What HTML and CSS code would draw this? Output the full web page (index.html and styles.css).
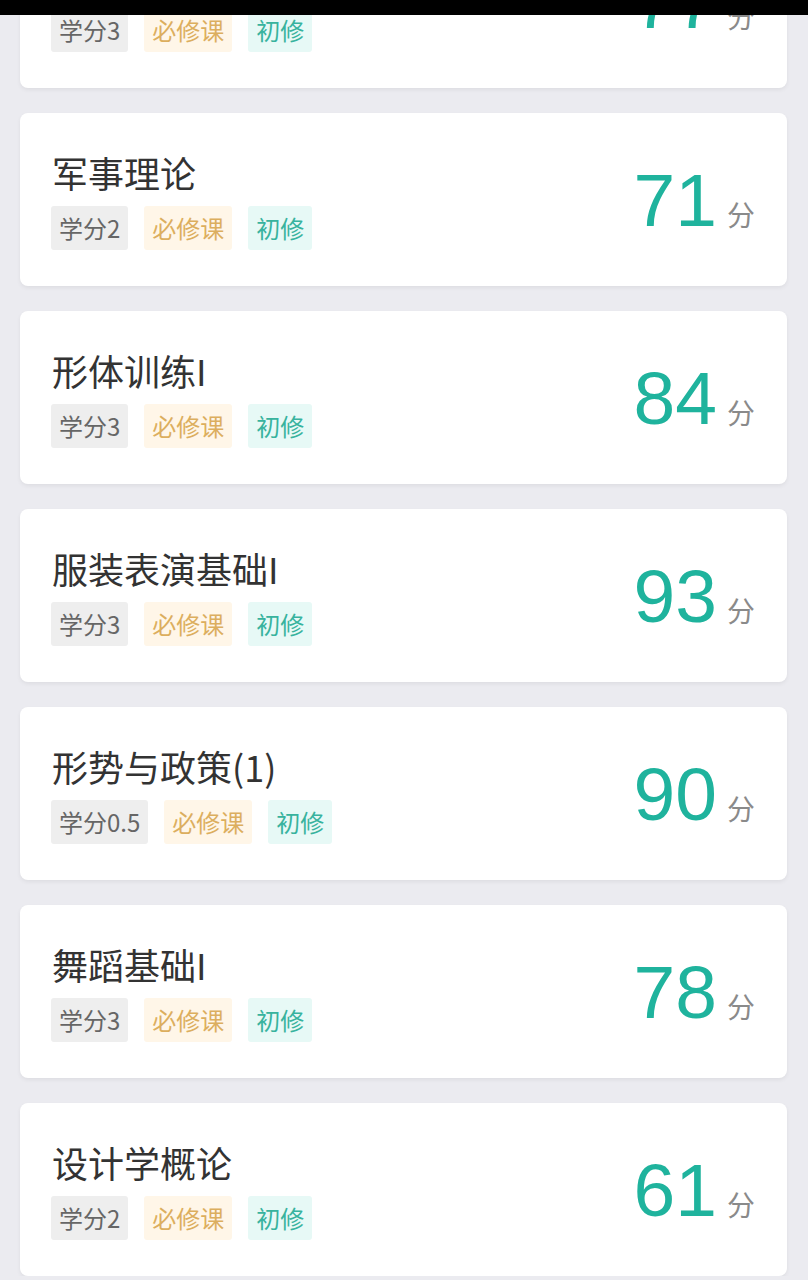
FILE: index.html
```html
<!DOCTYPE html>
<html lang="zh-CN">
<head>
    <meta charset="UTF-8">
    <meta name="viewport" content="width=device-width, initial-scale=1.0">
    <title>成绩</title>
    <link rel="stylesheet" href="styles.css">
</head>
<body>

    <div class="status-bar"></div>

    <main class="score-list" id="score-list">
        <!-- Course cards added here -->
    </main>

    <script>
        // Course scores
        const courses = [
            { name: "大学英语", credit: "3", score: 77 },
            { name: "军事理论", credit: "2", score: 71 },
            { name: "形体训练I", credit: "3", score: 84 },
            { name: "服装表演基础I", credit: "3", score: 93 },
            { name: "形势与政策(1)", credit: "0.5", score: 90 },
            { name: "舞蹈基础I", credit: "3", score: 78 },
            { name: "设计学概论", credit: "2", score: 61 }
        ];

        function displayCourses() {
            const list = document.getElementById("score-list");
            list.innerHTML = "";

            courses.forEach(course => {
                const card = document.createElement("div");
                card.className = "course-card";
                card.innerHTML = `
                    <div class="course-info">
                        <div class="course-name">${course.name}</div>
                        <div class="course-tags">
                            <span class="tag tag-credit">学分${course.credit}</span>
                            <span class="tag tag-type">必修课</span>
                            <span class="tag tag-exam">初修</span>
                        </div>
                    </div>
                    <div class="course-score">
                        <span class="score-num">${course.score}</span>
                        <span class="score-unit">分</span>
                    </div>
                `;
                list.appendChild(card);
            });
        }

        displayCourses();
    </script>

</body>
</html>
```

FILE: styles.css
```css
/* General Styles */
body {
    margin: 0;
    padding: 0;
    background-color: #ebebf0;
    font-family: "Noto Sans CJK SC", "Noto Sans", sans-serif;
    overflow: hidden;
}

/* Status bar lies over the scrolled list */
.status-bar {
    position: fixed;
    top: 0;
    left: 0;
    right: 0;
    height: 15px;
    background-color: #000;
    z-index: 10;
}

/* List, scrolled so the first card is cut off */
.score-list {
    display: flex;
    flex-direction: column;
    gap: 25px;
    margin: -85px 21px 0 20px;
}

.course-card {
    display: flex;
    align-items: center;
    justify-content: space-between;
    padding: 38px 30px 36px 31px;
    background-color: #fff;
    border-radius: 8px;
    box-shadow: 0 2px 4px rgba(0, 0, 0, 0.06);
}

.course-name {
    font-size: 36px;
    line-height: 42px;
    color: #333;
    padding-left: 1px;
}

.course-tags {
    display: flex;
    gap: 16px;
    margin-top: 13px;
}

.tag {
    height: 44px;
    line-height: 44px;
    padding: 0 8px;
    font-size: 24px;
    border-radius: 3px;
}

.tag-credit {
    background-color: #eeeeee;
    color: #666;
}

.tag-type {
    background-color: #fff6e8;
    color: #dcae5e;
}

.tag-exam {
    background-color: #e7f9f6;
    color: #38b39e;
}

/* Score */
.course-score {
    display: flex;
    align-items: baseline;
    gap: 10px;
    margin-right: 2px;
}

.score-num {
    font-family: "Liberation Sans", Arial, sans-serif;
    font-size: 75px;
    line-height: 1;
    color: #1fb39d;
}

.score-unit {
    font-size: 28px;
    color: #8a8a8a;
}
```
